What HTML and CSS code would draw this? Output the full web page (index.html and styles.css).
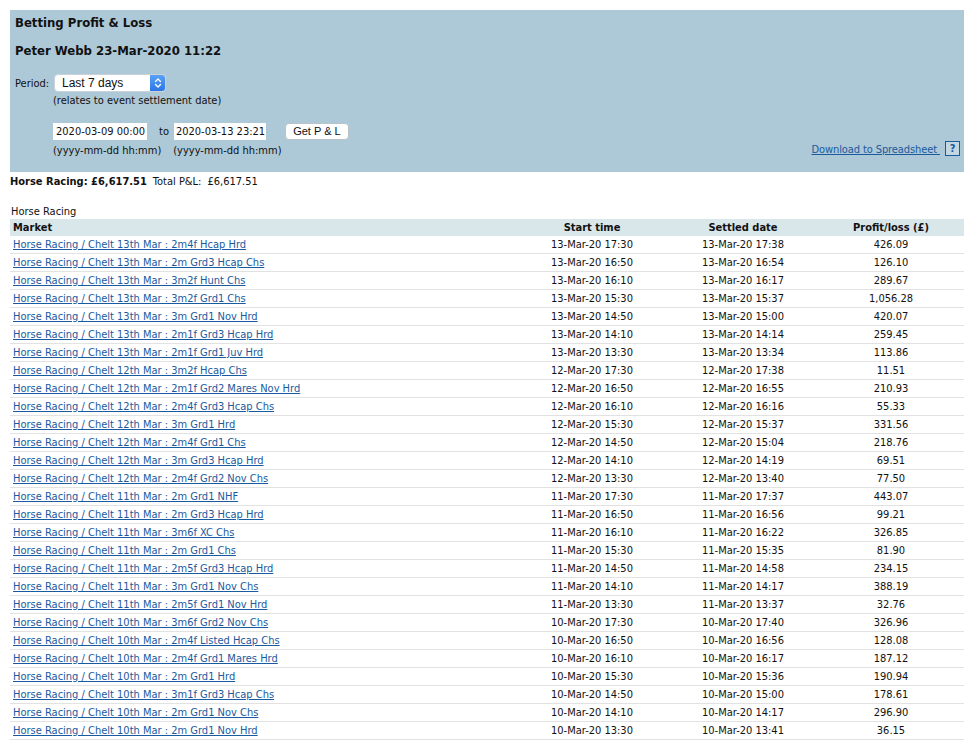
FILE: index.html
```html
<!DOCTYPE html>
<html>
<head>
<meta charset="utf-8">
<title>Betting Profit &amp; Loss</title>
<link rel="stylesheet" href="styles.css">
</head>
<body>
<div class="panel">
  <h1 class="title">Betting Profit &amp; Loss</h1>
  <h2 class="subtitle">Peter Webb 23-Mar-2020 11:22</h2>
  <div class="period-row">
    <span class="period-label">Period:</span>
    <div class="select">
      <span class="select-text">Last 7 days</span>
      <span class="select-btn">
        <svg width="8" height="12" viewBox="0 0 8 12"><path d="M1.5 4.5 L4 2 L6.5 4.5" fill="none" stroke="#fff" stroke-width="1.4" stroke-linecap="round" stroke-linejoin="round"/><path d="M1.5 7.5 L4 10 L6.5 7.5" fill="none" stroke="#fff" stroke-width="1.4" stroke-linecap="round" stroke-linejoin="round"/></svg>
      </span>
    </div>
  </div>
  <div class="note">(relates to event settlement date)</div>
  <div class="date-row">
    <span class="input">2020-03-09 00:00</span>
    <span class="to">to</span>
    <span class="input input2">2020-03-13 23:21</span>
    <span class="button">Get P &amp; L</span>
  </div>
  <div class="hint-row">
    <span class="hint">(yyyy-mm-dd hh:mm)</span>
    <span class="hint hint2">(yyyy-mm-dd hh:mm)</span>
    <span class="download"><a href="#" class="dl-link">Download to Spreadsheet&nbsp;</a><span class="help">?</span></span>
  </div>
</div>
<div class="summary"><b>Horse Racing: £6,617.51</b><span class="total">Total P&amp;L:</span><span class="total-val">£6,617.51</span></div>
<div class="caption">Horse Racing</div>
<table class="pl">
  <colgroup><col class="c1"><col class="c2"><col class="c3"><col class="c4"></colgroup>
  <thead><tr><th class="market">Market</th><th>Start time</th><th>Settled date</th><th>Profit/loss (£)</th></tr></thead>
  <tbody>
    <tr><td class="market"><a href="#">Horse Racing / Chelt 13th Mar : 2m4f Hcap Hrd</a></td><td>13-Mar-20 17:30</td><td>13-Mar-20 17:38</td><td>426.09</td></tr>
    <tr><td class="market"><a href="#">Horse Racing / Chelt 13th Mar : 2m Grd3 Hcap Chs</a></td><td>13-Mar-20 16:50</td><td>13-Mar-20 16:54</td><td>126.10</td></tr>
    <tr><td class="market"><a href="#">Horse Racing / Chelt 13th Mar : 3m2f Hunt Chs</a></td><td>13-Mar-20 16:10</td><td>13-Mar-20 16:17</td><td>289.67</td></tr>
    <tr><td class="market"><a href="#">Horse Racing / Chelt 13th Mar : 3m2f Grd1 Chs</a></td><td>13-Mar-20 15:30</td><td>13-Mar-20 15:37</td><td>1,056.28</td></tr>
    <tr><td class="market"><a href="#">Horse Racing / Chelt 13th Mar : 3m Grd1 Nov Hrd</a></td><td>13-Mar-20 14:50</td><td>13-Mar-20 15:00</td><td>420.07</td></tr>
    <tr><td class="market"><a href="#">Horse Racing / Chelt 13th Mar : 2m1f Grd3 Hcap Hrd</a></td><td>13-Mar-20 14:10</td><td>13-Mar-20 14:14</td><td>259.45</td></tr>
    <tr><td class="market"><a href="#">Horse Racing / Chelt 13th Mar : 2m1f Grd1 Juv Hrd</a></td><td>13-Mar-20 13:30</td><td>13-Mar-20 13:34</td><td>113.86</td></tr>
    <tr><td class="market"><a href="#">Horse Racing / Chelt 12th Mar : 3m2f Hcap Chs</a></td><td>12-Mar-20 17:30</td><td>12-Mar-20 17:38</td><td>11.51</td></tr>
    <tr><td class="market"><a href="#">Horse Racing / Chelt 12th Mar : 2m1f Grd2 Mares Nov Hrd</a></td><td>12-Mar-20 16:50</td><td>12-Mar-20 16:55</td><td>210.93</td></tr>
    <tr><td class="market"><a href="#">Horse Racing / Chelt 12th Mar : 2m4f Grd3 Hcap Chs</a></td><td>12-Mar-20 16:10</td><td>12-Mar-20 16:16</td><td>55.33</td></tr>
    <tr><td class="market"><a href="#">Horse Racing / Chelt 12th Mar : 3m Grd1 Hrd</a></td><td>12-Mar-20 15:30</td><td>12-Mar-20 15:37</td><td>331.56</td></tr>
    <tr><td class="market"><a href="#">Horse Racing / Chelt 12th Mar : 2m4f Grd1 Chs</a></td><td>12-Mar-20 14:50</td><td>12-Mar-20 15:04</td><td>218.76</td></tr>
    <tr><td class="market"><a href="#">Horse Racing / Chelt 12th Mar : 3m Grd3 Hcap Hrd</a></td><td>12-Mar-20 14:10</td><td>12-Mar-20 14:19</td><td>69.51</td></tr>
    <tr><td class="market"><a href="#">Horse Racing / Chelt 12th Mar : 2m4f Grd2 Nov Chs</a></td><td>12-Mar-20 13:30</td><td>12-Mar-20 13:40</td><td>77.50</td></tr>
    <tr><td class="market"><a href="#">Horse Racing / Chelt 11th Mar : 2m Grd1 NHF</a></td><td>11-Mar-20 17:30</td><td>11-Mar-20 17:37</td><td>443.07</td></tr>
    <tr><td class="market"><a href="#">Horse Racing / Chelt 11th Mar : 2m Grd3 Hcap Hrd</a></td><td>11-Mar-20 16:50</td><td>11-Mar-20 16:56</td><td>99.21</td></tr>
    <tr><td class="market"><a href="#">Horse Racing / Chelt 11th Mar : 3m6f XC Chs</a></td><td>11-Mar-20 16:10</td><td>11-Mar-20 16:22</td><td>326.85</td></tr>
    <tr><td class="market"><a href="#">Horse Racing / Chelt 11th Mar : 2m Grd1 Chs</a></td><td>11-Mar-20 15:30</td><td>11-Mar-20 15:35</td><td>81.90</td></tr>
    <tr><td class="market"><a href="#">Horse Racing / Chelt 11th Mar : 2m5f Grd3 Hcap Hrd</a></td><td>11-Mar-20 14:50</td><td>11-Mar-20 14:58</td><td>234.15</td></tr>
    <tr><td class="market"><a href="#">Horse Racing / Chelt 11th Mar : 3m Grd1 Nov Chs</a></td><td>11-Mar-20 14:10</td><td>11-Mar-20 14:17</td><td>388.19</td></tr>
    <tr><td class="market"><a href="#">Horse Racing / Chelt 11th Mar : 2m5f Grd1 Nov Hrd</a></td><td>11-Mar-20 13:30</td><td>11-Mar-20 13:37</td><td>32.76</td></tr>
    <tr><td class="market"><a href="#">Horse Racing / Chelt 10th Mar : 3m6f Grd2 Nov Chs</a></td><td>10-Mar-20 17:30</td><td>10-Mar-20 17:40</td><td>326.96</td></tr>
    <tr><td class="market"><a href="#">Horse Racing / Chelt 10th Mar : 2m4f Listed Hcap Chs</a></td><td>10-Mar-20 16:50</td><td>10-Mar-20 16:56</td><td>128.08</td></tr>
    <tr><td class="market"><a href="#">Horse Racing / Chelt 10th Mar : 2m4f Grd1 Mares Hrd</a></td><td>10-Mar-20 16:10</td><td>10-Mar-20 16:17</td><td>187.12</td></tr>
    <tr><td class="market"><a href="#">Horse Racing / Chelt 10th Mar : 2m Grd1 Hrd</a></td><td>10-Mar-20 15:30</td><td>10-Mar-20 15:36</td><td>190.94</td></tr>
    <tr><td class="market"><a href="#">Horse Racing / Chelt 10th Mar : 3m1f Grd3 Hcap Chs</a></td><td>10-Mar-20 14:50</td><td>10-Mar-20 15:00</td><td>178.61</td></tr>
    <tr><td class="market"><a href="#">Horse Racing / Chelt 10th Mar : 2m Grd1 Nov Chs</a></td><td>10-Mar-20 14:10</td><td>10-Mar-20 14:17</td><td>296.90</td></tr>
    <tr><td class="market"><a href="#">Horse Racing / Chelt 10th Mar : 2m Grd1 Nov Hrd</a></td><td>10-Mar-20 13:30</td><td>10-Mar-20 13:41</td><td>36.15</td></tr>
  </tbody>
</table>
</body>
</html>
```

FILE: styles.css
```css
html, body {
  margin: 0;
  padding: 0;
  background: #ffffff;
}
body {
  padding: 10px 8px 0 10px;
  font-family: "DejaVu Sans Condensed", "DejaVu Sans", sans-serif;
  font-size: 11px;
  color: #111;
}
.panel {
  width: 954px;
  height: 162px;
  box-sizing: border-box;
  background: #adc8d6;
  padding: 5px 4px 0 5px;
}
.title {
  margin: 0;
  font-size: 13px;
  line-height: 16px;
  font-weight: bold;
}
.subtitle {
  margin: 11px 0 0 0;
  font-size: 13px;
  line-height: 18px;
  font-weight: bold;
}
.period-row {
  margin-top: 14px;
  display: flex;
  align-items: center;
  height: 18px;
}
.period-label {
  width: 39px;
}
.select {
  width: 112px;
  height: 18px;
  box-sizing: border-box;
  background: #fff;
  border: 1px solid #c9d2d8;
  border-radius: 4px;
  display: flex;
  align-items: center;
  justify-content: space-between;
  font-family: "Liberation Sans", sans-serif;
  font-size: 12px;
}
.select-text {
  padding-left: 7px;
}
.select-btn {
  width: 15px;
  height: 16px;
  background: linear-gradient(#5aa2f5, #2a76e8);
  border-radius: 0 3px 3px 0;
  display: flex;
  align-items: center;
  justify-content: center;
}
.note {
  margin: 2px 0 0 38px;
  line-height: 14px;
}
.date-row {
  margin: 15px 0 0 38px;
  display: flex;
  align-items: center;
  height: 17px;
}
.input {
  width: 94px;
  height: 17px;
  box-sizing: border-box;
  background: #fff;
  line-height: 17px;
  padding-left: 3px;
  font-size: 11px;
  white-space: nowrap;
  overflow: hidden;
}
.to {
  margin: 0 5px 0 12px;
}
.input2 {
  width: 92px;
  padding-left: 2px;
}
.button {
  margin-left: 19px;
  width: 64px;
  height: 17px;
  box-sizing: border-box;
  background: #fff;
  border: 1px solid #b8c2c8;
  border-radius: 4px;
  text-align: center;
  line-height: 15px;
  font-family: "Liberation Sans", sans-serif;
  font-size: 11px;
  white-space: nowrap;
}
.hint-row {
  margin: 1px 0 0 38px;
  display: flex;
  align-items: flex-end;
  line-height: 14px;
}
.hint2 {
  margin-left: 12px;
}
.download {
  margin-left: auto;
  display: flex;
  align-items: flex-end;
  margin-bottom: 1px;
}
.dl-link {
  color: #1a5a9e;
  text-decoration: underline;
  line-height: 14px;
  letter-spacing: -0.1px;
}
.help {
  margin-left: 5px;
  width: 15px;
  height: 15px;
  box-sizing: border-box;
  border: 1px solid #1a5a9e;
  color: #1a5a9e;
  font-weight: bold;
  text-align: center;
  line-height: 13px;
  font-size: 11px;
  margin-bottom: 1px;
  background: #c3d7e2;
}
.summary {
  margin-top: 3px;
  line-height: 14px;
}
.summary .total {
  margin-left: 6px;
}
.summary .total-val {
  margin-left: 6px;
}
.caption {
  margin-top: 16px;
  margin-left: 1px;
  line-height: 14px;
}
.pl {
  width: 954px;
  border-collapse: collapse;
  table-layout: fixed;
}
.pl col.c1 { width: 506px; }
.pl col.c2 { width: 152px; }
.pl col.c3 { width: 150px; }
.pl col.c4 { width: 146px; }
.pl th {
  background: #d9e6ea;
  font-weight: bold;
  text-align: center;
  height: 17px;
  padding: 0;
  line-height: 17px;
}
.pl td {
  text-align: center;
  height: 17px;
  padding: 0;
  line-height: 17px;
  border-bottom: 1px solid #e2e2e2;
}
.pl .market {
  text-align: left;
  padding-left: 3px;
}
.pl a {
  color: #1a5a9e;
  text-decoration: underline;
}
```
